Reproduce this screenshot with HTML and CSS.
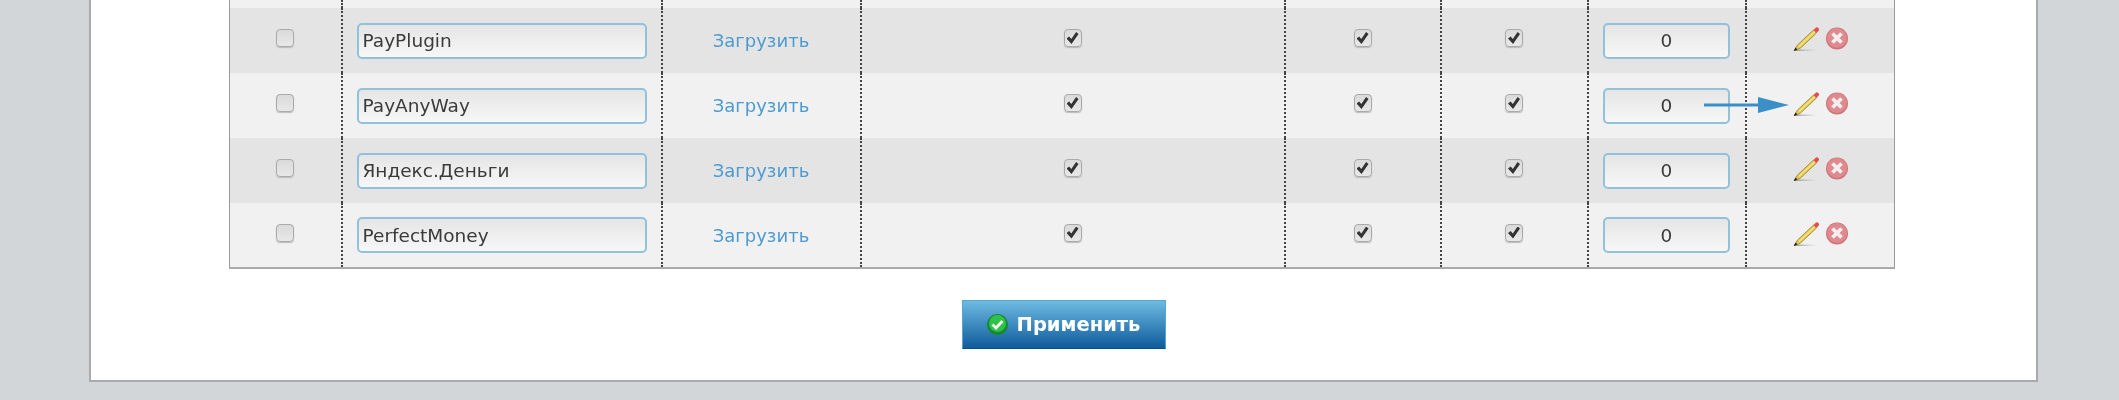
FILE: index.html
```html
<!DOCTYPE html>
<html lang="ru">
<head>
  <meta charset="UTF-8" />
  <title>Способы оплаты</title>
  <link rel="stylesheet" href="styles.css">
</head>
<body>
  <svg class="sprites" width="0" height="0">
    <defs>
      <linearGradient id="pencilShadow" x1="0" x2="1" y1="0" y2="0">
        <stop offset="0" stop-color="#777" stop-opacity=".7"/>
        <stop offset="1" stop-color="#999" stop-opacity="0"/>
      </linearGradient>
    </defs>
    <symbol id="pencil" viewBox="0 0 26 24">
      <path d="M2 22.5 H24 V24 H2 Z" fill="url(#pencilShadow)"/>
      <path d="M4.5 18 L20.5 3 L23.5 6 L7.5 21 L1 24 Z" fill="#e6c84a" stroke="#8a7426" stroke-width=".7"/>
      <path d="M6 19.5 L22 4.5" stroke="#f6e694" stroke-width="1.2"/>
      <path d="M2.6 20.6 L4.4 22.4 L.6 24 Z" fill="#222"/>
      <path d="M20.5 3 L22.5 1 A1.8 1.8 0 0 1 25.4 3.8 L23.5 6 Z" fill="#ea4a4a"/>
    </symbol>
    <symbol id="remove" viewBox="0 0 22 23">
      <circle cx="11" cy="11.5" r="11" fill="#cf7479"/>
      <circle cx="11" cy="11" r="10" fill="#de8a8e"/>
      <path d="M6.5 6.5 L15.5 15.5 M15.5 6.5 L6.5 15.5" stroke="#f4eeee" stroke-width="3.8"/>
    </symbol>
    <symbol id="ok" viewBox="0 0 21 21">
      <circle cx="10.5" cy="10.5" r="10.5" fill="#138a2c"/>
      <circle cx="10.5" cy="9.5" r="8.5" fill="#2fc24a"/>
      <path d="M5.5 10.5 L9 14 L15.5 7" fill="none" stroke="#f2f6f2" stroke-width="2.8"/>
    </symbol>
  </svg>

  <div class="panel">
    <table class="methods">
      <colgroup>
        <col class="c-check"><col class="c-name"><col class="c-load"><col class="c-wide">
        <col class="c-flag1"><col class="c-flag2"><col class="c-sort"><col class="c-actions">
      </colgroup>
      <tbody>
        <tr class="cut">
          <td></td><td></td><td></td><td></td><td></td><td></td><td></td><td></td>
        </tr>
        <tr>
          <td><input type="checkbox" class="cb"></td>
          <td><input type="text" class="field" value="PayPlugin"></td>
          <td><a href="#" class="load">Загрузить</a></td>
          <td><input type="checkbox" class="cb" checked></td>
          <td><input type="checkbox" class="cb" checked></td>
          <td><input type="checkbox" class="cb" checked></td>
          <td><input type="text" class="field num" value="0"></td>
          <td><div class="actions"><svg class="pencil"><use href="#pencil"/></svg><svg class="remove"><use href="#remove"/></svg></div></td>
        </tr>
        <tr>
          <td><input type="checkbox" class="cb"></td>
          <td><input type="text" class="field" value="PayAnyWay"></td>
          <td><a href="#" class="load">Загрузить</a></td>
          <td><input type="checkbox" class="cb" checked></td>
          <td><input type="checkbox" class="cb" checked></td>
          <td><input type="checkbox" class="cb" checked></td>
          <td><input type="text" class="field num" value="0"></td>
          <td class="has-arrow">
            <svg class="arrow" viewBox="0 0 85 16"><path d="M0 6.5 H54 V0 L85 8 L54 16 V9.5 H0 Z" fill="#3a8fc6"/></svg>
            <div class="actions"><svg class="pencil"><use href="#pencil"/></svg><svg class="remove"><use href="#remove"/></svg></div>
          </td>
        </tr>
        <tr>
          <td><input type="checkbox" class="cb"></td>
          <td><input type="text" class="field" value="Яндекс.Деньги"></td>
          <td><a href="#" class="load">Загрузить</a></td>
          <td><input type="checkbox" class="cb" checked></td>
          <td><input type="checkbox" class="cb" checked></td>
          <td><input type="checkbox" class="cb" checked></td>
          <td><input type="text" class="field num" value="0"></td>
          <td><div class="actions"><svg class="pencil"><use href="#pencil"/></svg><svg class="remove"><use href="#remove"/></svg></div></td>
        </tr>
        <tr>
          <td><input type="checkbox" class="cb"></td>
          <td><input type="text" class="field" value="PerfectMoney"></td>
          <td><a href="#" class="load">Загрузить</a></td>
          <td><input type="checkbox" class="cb" checked></td>
          <td><input type="checkbox" class="cb" checked></td>
          <td><input type="checkbox" class="cb" checked></td>
          <td><input type="text" class="field num" value="0"></td>
          <td><div class="actions"><svg class="pencil"><use href="#pencil"/></svg><svg class="remove"><use href="#remove"/></svg></div></td>
        </tr>
      </tbody>
    </table>

    <div class="submit-row">
      <button class="apply"><svg class="ok"><use href="#ok"/></svg>Применить</button>
    </div>
  </div>
</body>
</html>
```

FILE: styles.css
```css
html, body {
  margin: 0;
  height: 400px;
  overflow: hidden;
}

body {
  background-color: #d3d6d9;
  font-family: "DejaVu Sans", sans-serif;
}

.sprites {
  position: fixed;
  width: 0;
  height: 0;
}

/* the source picture is soft, so the whole panel gets a slight blur */
.panel {
  width: 1945px;
  margin-left: 89px;
  height: 380px;
  background-color: #fff;
  border: 2px solid #aaa;
  border-top: none;
  filter: blur(.5px);
}

/* table */
.methods {
  width: 1665px;
  margin-left: 138px;
  table-layout: fixed;
  border-collapse: collapse;
  border-left: 1px solid #999;
  border-right: 1px solid #999;
  border-bottom: 2px solid #aaa;
}

.c-check { width: 112px; }
.c-name { width: 320px; }
.c-load { width: 199px; }
.c-wide { width: 424px; }
.c-flag1 { width: 156px; }
.c-flag2 { width: 147px; }
.c-sort { width: 158px; }
.c-actions { width: 149px; }

.methods tr {
  height: 65px;
  background-color: #f1f1f1;
}

.methods tr:nth-child(even) {
  background-color: #e4e4e4;
}

.methods tr.cut {
  height: 8px;
}

.methods td {
  padding: 0;
  text-align: center;
  vertical-align: middle;
  border-left: 2px dotted #444;
}

.methods td:first-child {
  border-left: none;
}

/* checkboxes */
.cb {
  appearance: none;
  display: block;
  position: relative;
  width: 18px;
  height: 18px;
  margin: 0 auto 5px;
  background: linear-gradient(#dadada, #e8e8e8);
  border: 1px solid #aaa;
  border-radius: 4px;
  box-shadow: 0 1px 1px #bbb;
}

.cb:checked::before {
  content: "";
  position: absolute;
  left: 2px;
  top: 2px;
  width: 12px;
  height: 12px;
  background-color: #333;
  clip-path: polygon(0 55%, 22% 38%, 40% 58%, 80% 0, 100% 16%, 42% 100%);
}

/* text fields */
.field {
  display: block;
  box-sizing: border-box;
  width: 290px;
  height: 36px;
  margin: 0 auto;
  padding: 0 4px;
  font-family: "DejaVu Sans", sans-serif;
  font-size: 18.5px;
  color: #3a3a3a;
  background: linear-gradient(#e5e5e5, #f7f7f7);
  border: 2px solid #92c1dc;
  border-radius: 5px;
}

.field.num {
  width: 127px;
  text-align: center;
}

.load {
  font-size: 18px;
  color: #4b9bd2;
  text-decoration: none;
}

/* row icons */
.actions {
  display: flex;
  justify-content: center;
  align-items: flex-start;
  gap: 7px;
  margin-bottom: 3px;
}

.pencil {
  width: 26px;
  height: 24px;
}

.remove {
  width: 22px;
  height: 23px;
}

.has-arrow {
  position: relative;
}

.arrow {
  position: absolute;
  left: -43px;
  top: 24px;
  width: 85px;
  height: 16px;
}

/* submit */
.submit-row {
  display: flex;
  justify-content: center;
  margin-top: 31px;
}

.apply {
  display: flex;
  align-items: center;
  justify-content: center;
  gap: 9px;
  box-sizing: border-box;
  width: 204px;
  height: 49px;
  padding: 0;
  font-family: "DejaVu Sans", sans-serif;
  font-size: 19.5px;
  font-weight: bold;
  color: #fff;
  background: linear-gradient(#6dbae2, #0f5b9c);
  border: 1px solid #5ba6d0;
  border-bottom-color: #0d4f87;
}

.ok {
  width: 21px;
  height: 21px;
}
```
